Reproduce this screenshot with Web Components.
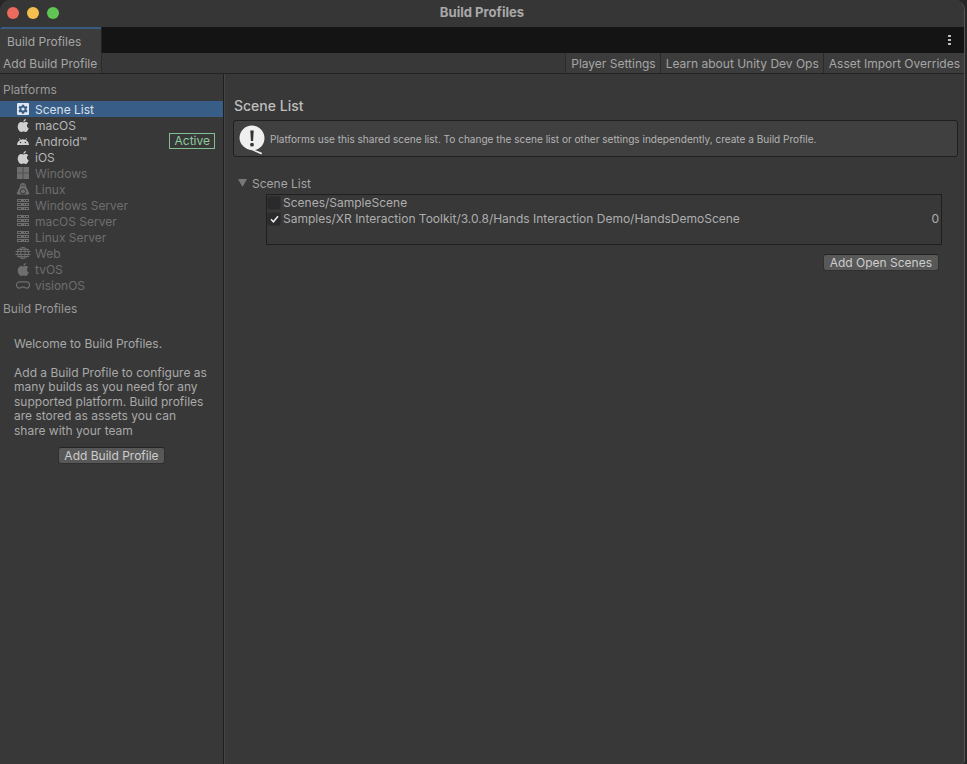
<!DOCTYPE html>
<html>
<head>
<meta charset="utf-8">
<title>Build Profiles</title>
<style>
  html, body { margin: 0; height: 100%; background: #262626; overflow: hidden; }
  body { font: 12px Inter, "Liberation Sans", sans-serif; color: #bdbdbd; }
</style>
</head>
<body>

<build-window>
  <title-bar slot="title">Build Profiles</title-bar>
  <tab-strip slot="tabs">Build Profiles</tab-strip>
  <tool-bar slot="toolbar">
    <tool-button>Add Build Profile</tool-button>
    <span style="flex:1"></span>
    <tool-button left>Player Settings</tool-button>
    <tool-button left>Learn about Unity Dev Ops</tool-button>
    <tool-button left>Asset Import Overrides</tool-button>
  </tool-bar>

  <side-panel slot="side">
    <section-label>Platforms</section-label>
    <platform-item icon="scene" selected>Scene List</platform-item>
    <platform-item icon="apple">macOS</platform-item>
    <platform-item icon="android" active>Android™</platform-item>
    <platform-item icon="apple">iOS</platform-item>
    <platform-item icon="windows" disabled>Windows</platform-item>
    <platform-item icon="linux" disabled>Linux</platform-item>
    <platform-item icon="server" disabled>Windows Server</platform-item>
    <platform-item icon="server" disabled>macOS Server</platform-item>
    <platform-item icon="server" disabled>Linux Server</platform-item>
    <platform-item icon="web" disabled>Web</platform-item>
    <platform-item icon="apple" disabled>tvOS</platform-item>
    <platform-item icon="vision" disabled>visionOS</platform-item>
    <section-label profiles>Build Profiles</section-label>
    <welcome-note>
      <span slot="head">Welcome to Build Profiles.</span>
      Add a Build Profile to configure as many builds as you need for any supported platform. Build profiles are stored as assets you can share with your team
      <unity-button slot="action" style="padding:0 5px">Add Build Profile</unity-button>
    </welcome-note>
  </side-panel>

  <main-panel slot="main">
    <help-box>Platforms use this shared scene list. To change the scene list or other settings independently, create a Build Profile.</help-box>
    <scene-list>
      <scene-row name="Scenes/SampleScene"></scene-row>
      <scene-row name="Samples/XR Interaction Toolkit/3.0.8/Hands Interaction Demo/HandsDemoScene" checked index="0"></scene-row>
    </scene-list>
  </main-panel>
</build-window>

<script>
// small helper so every element gets the same open shadow setup
function shadow(el, html) {
  const root = el.attachShadow({ mode: 'open' });
  root.innerHTML = html;
  return root;
}

const APPLE = `<path d="M9.900 1c.1 1.100-.9 2.700-2.500 2.700C7.200 2.400 8.500 1.100 9.900 1zM7.300 4.400c.7 0 1.300-.5 2.400-.5 1 0 2 .5 2.600 1.400-2 1.200-1.700 4 .4 4.900-.5 1.400-1.700 3.800-3 3.800-.8 0-1.200-.5-2.200-.5s-1.500.5-2.200.5C3.200 14 1.700 10.800 1.700 8.500c0-2.700 1.700-4.500 3.500-4.500.9 0 1.500.4 2.100.4z"/>`;

// one server rack row: solid bar with a long slot on the left and two dots on the right
const rack = y => `M1 ${y}h12v3H1zM2 ${y + 1}v1h3v-1zM8 ${y + 1}v1h1v-1zM10 ${y + 1}v1h2v-1z`;

const ICONS = {
  scene: `<path fill-rule="evenodd" d="M2 1h10a1 1 0 0 1 1 1v10a1 1 0 0 1-1 1H2a1 1 0 0 1-1-1V2a1 1 0 0 1 1-1zm4 1.700-.3 1.300-1 .5-1.200-.5-1 1.700 1 .9v1.200l-1 .9 1 1.700 1.200-.5 1 .5.300 1.300h2l.3-1.300 1-.5 1.200.5 1-1.700-1-.9V6.600l1-.9-1-1.700-1.200.5-1-.5L8 2.700H6zM7 5.400A1.600 1.600 0 1 1 7 8.600 1.600 1.600 0 0 1 7 5.400z"/>`,
  apple: APPLE,
  android: `<path d="M1 11c.1-2.200 1.200-4 3-5L3 4.300l.5-.3 1.100 1.700A6.300 6.300 0 0 1 7 5.200c.9 0 1.700.2 2.400.5L10.500 4l.5.3-1 1.700c1.800 1 2.900 2.800 3 5H1z"/><circle cx="4.600" cy="8.500" r=".7" fill="#383838"/><circle cx="9.400" cy="8.500" r=".7" fill="#383838"/>`,
  windows: `<path d="M1 1h5.700v5.700H1zM7.300 1H13v5.700H7.300zM1 7.300h5.700V13H1zM7.300 7.300H13V13H7.300z"/>`,
  linux: `<path d="M7 1a3 3 0 0 1 3 3c0 1 .4 1.600 1 2.400.8 1 1.300 2.200 1.300 3.300l1.200 1.300-1 1.500H1.500L.5 11l1.200-1.300c0-1.100.5-2.300 1.300-3.300.6-.8 1-1.400 1-2.400a3 3 0 0 1 3-3z"/><ellipse cx="7" cy="9.300" rx="2.700" ry="2.500" fill="none" stroke="#383838"/><circle cx="5.900" cy="3.500" r=".7" fill="#383838"/><circle cx="8.100" cy="3.500" r=".7" fill="#383838"/>`,
  server: `<path fill-rule="evenodd" d="${rack(1)}${rack(5)}${rack(9)}"/>`,
  web: `<g fill="none" stroke="currentColor" stroke-width="1"><ellipse cx="7" cy="7" rx="5.500" ry="5.500"/><ellipse cx="7" cy="7" rx="2.200" ry="5.500"/></g><path d="M-.5 5h15v1h-15zM-.5 8h15v1h-15zM1 3h12v1H1zM1 10h12v1H1z"/>`,
  vision: `<path fill="none" stroke="currentColor" stroke-width="1.200" d="M4 3.800h6c2 0 3.500 1.200 3.500 3 0 1.800-1.200 3.300-2.800 3.300-1.500 0-2.200-1.300-3.700-1.300s-2.200 1.300-3.700 1.300C1.700 10.100.5 8.600.5 6.800c0-1.800 1.500-3 3.500-3z"/>`
};

class BuildWindow extends HTMLElement {
  constructor() {
    super();
    shadow(this, `
      <style>
        :host { display: flex; flex-direction: column; width: 965px; height: 764px; box-sizing: border-box; background: #383838; border-right: 1px solid #565656; border-radius: 10px 10px 4px 0; overflow: hidden; }
        .body { flex: 1; display: flex; min-height: 0; }
      </style>
      <slot name="title"></slot>
      <slot name="tabs"></slot>
      <slot name="toolbar"></slot>
      <div class="body"><slot name="side"></slot><slot name="main"></slot></div>`);
  }
}

class TitleBar extends HTMLElement {
  constructor() {
    super();
    shadow(this, `
      <style>
        :host { display: flex; align-items: center; justify-content: center; position: relative; height: 23px; padding-bottom: 4px; background: #363636; color: #a8a8a8; font-weight: 700; font-size: 13.100px; }
        .lights { position: absolute; left: 7px; top: 7px; display: flex; gap: 8px; }
        i { display: block; width: 12px; height: 12px; border-radius: 50%; }
      </style>
      <div class="lights">
        <i style="background:#ec6a5e"></i><i style="background:#f4bf4f"></i><i style="background:#61c554"></i>
      </div>
      <slot></slot>`);
  }
}

class TabStrip extends HTMLElement {
  constructor() {
    super();
    shadow(this, `
      <style>
        :host { display: flex; height: 26px; background: #141414; justify-content: space-between; }
        .tab { width: 102px; box-sizing: border-box; padding: 3px 0 0 7px; background: #3c3c3c; border-top: 2px solid #3a5b7f; border-right: 1px solid #232323; border-radius: 2px 2px 0 0; line-height: 20px; color: #a6a6a6; }
        svg { width: 3px; height: 10px; margin: 8px 13px 0 0; fill: #bdbdbd; }
      </style>
      <div class="tab"><slot></slot></div>
      <svg viewBox="0 0 3 10"><rect y="0" width="3" height="2"/><rect y="4" width="3" height="2"/><rect y="8" width="3" height="2"/></svg>`);
  }
}

class ToolBar extends HTMLElement {
  constructor() {
    super();
    shadow(this, `
      <style>
        :host { display: flex; height: 21px; box-sizing: border-box; background: #383838; border-bottom: 1px solid #232323; }
      </style>
      <slot></slot>`);
  }
}

class ToolButton extends HTMLElement {
  constructor() {
    super();
    shadow(this, `
      <style>
        :host { display: block; padding: 2px 4px 0 3px; line-height: 18px; color: #a6a6a6; background: #3c3c3c; border-right: 1px solid #2b2b2b; white-space: nowrap; }
        :host([left]) { border-right: none; border-left: 1px solid #2b2b2b; padding: 2px 4px 0 5px; }
      </style>
      <slot></slot>`);
  }
}

class SidePanel extends HTMLElement {
  constructor() {
    super();
    shadow(this, `
      <style>
        :host { display: block; width: 223px; height: 100%; border-right: 1px solid #1f1f1f; box-shadow: 1px 0 0 #454545; }
      </style>
      <slot></slot>`);
  }
}

class SectionLabel extends HTMLElement {
  constructor() {
    super();
    shadow(this, `
      <style>
        :host { display: block; height: 27px; box-sizing: border-box; padding: 8px 0 0 3px; line-height: 16px; color: #9a9a9a; }
        :host([profiles]) { height: 25px; padding-top: 8px; }
      </style>
      <slot></slot>`);
  }
}

class PlatformItem extends HTMLElement {
  constructor() {
    super();
    const kind = this.getAttribute('icon');
    shadow(this, `
      <style>
        :host { display: flex; align-items: center; height: 16px; padding-left: 16px; color: #b6b6b6; }
        :host([selected]) { background: #385d87; color: #d8e0ea; }
        :host([disabled]) { color: #6e6e6e; }
        svg { width: 14px; height: 14px; margin-right: 5px; fill: currentColor; flex: none; color: #cfcfcf; overflow: visible; }
        :host([selected]) svg { color: #dfe6ee; }
        :host([disabled]) svg { color: #6e6e6e; }
        .badge { margin-left: auto; margin-right: 8px; height: 14px; border: 1px solid #82bd93; color: #8dcb9d; line-height: 14px; padding: 0 4px 0 5px; }
      </style>
      <svg viewBox="0 0 14 14">${ICONS[kind]}</svg>
      <slot></slot>
      ${this.hasAttribute('active') ? '<span class="badge">Active</span>' : ''}`);
  }
}

class WelcomeNote extends HTMLElement {
  constructor() {
    super();
    shadow(this, `
      <style>
        :host { display: block; padding: 19px 16px 0 14px; line-height: 14.500px; color: #a8a8a8; }
        .head { margin-bottom: 14px; }
        .act { display: flex; justify-content: center; margin: 9px -13px 0 -11px; }
      </style>
      <div class="head"><slot name="head"></slot></div>
      <slot></slot>
      <div class="act"><slot name="action"></slot></div>`);
  }
}

class UnityButton extends HTMLElement {
  constructor() {
    super();
    shadow(this, `
      <style>
        :host { display: inline-block; height: 15px; line-height: 15px; padding: 0 6px; border-radius: 3px; background: #585858; color: #cdcdcd; border: 1px solid #303030; border-top-color: #242424; white-space: nowrap; }
      </style>
      <slot></slot>`);
  }
}

class MainPanel extends HTMLElement {
  constructor() {
    super();
    shadow(this, `
      <style>
        :host { display: block; flex: 1; min-width: 0; padding: 23px 6px 0 9px; }
        h2 { margin: 0 0 6px 1px; font-size: 14px; font-weight: 500; line-height: 17px; color: #bebebe; }
      </style>
      <h2>Scene List</h2>
      <slot></slot>`);
  }
}

class HelpBox extends HTMLElement {
  constructor() {
    super();
    shadow(this, `
      <style>
        :host { display: flex; align-items: center; height: 35px; border: 1px solid #1f1f1f; border-radius: 3px; background: #404040; font-size: 10.050px; color: #b4b4b4; white-space: nowrap; }
        svg { width: 28px; height: 32px; margin: 0 4px 0 4px; flex: none; }
      </style>
      <svg viewBox="0 0 28 32">
        <path fill="#efefef" d="M14 2.500c7 0 12.500 5.500 12.500 12.500 0 6-4 11-9.500 12l7 2.800-.5 1.700-9.500-4.200C7.500 26.500 1.500 21.500 1.500 15 1.500 8 7 2.500 14 2.500z"/>
        <path fill="#333" d="M12.300 7.500h3.400l-.6 10.500h-2.200zM14 19.800a1.900 1.900 0 1 1 0 3.800 1.900 1.900 0 0 1 0-3.800z"/>
      </svg>
      <slot></slot>`);
  }
}

class SceneList extends HTMLElement {
  constructor() {
    super();
    shadow(this, `
      <style>
        :host { display: block; }
        .head { display: flex; align-items: center; margin-top: 18px; height: 16px; color: #a4a4a4; }
        .head svg { width: 9px; height: 8px; margin: 0 5px 0 5px; fill: #787878; }
        .list { margin: 3px 16px 0 33px; height: 49px; border: 1px solid #1f1f1f; }
        .foot { display: flex; justify-content: flex-end; margin: 9px 19px 0 0; }
      </style>
      <div class="head"><svg viewBox="0 0 9 8"><path d="M0 0h9L4.500 8z"/></svg>Scene List</div>
      <div class="list"><slot></slot></div>
      <div class="foot"><unity-button>Add Open Scenes</unity-button></div>`);
  }
}

class SceneRow extends HTMLElement {
  constructor() {
    super();
    const checked = this.hasAttribute('checked');
    shadow(this, `
      <style>
        :host { display: flex; align-items: center; height: 16px; padding: 0 2px 0 0; color: #aeaeae; white-space: nowrap; }
        .box { width: 12px; height: 12px; margin-right: 2px; flex: none; background: #2a2a2a; border: 1px solid #303030; border-radius: 3px; display: flex; align-items: center; justify-content: center; }
        .box svg { width: 9px; height: 8px; }
        .txt { padding-bottom: 2px; }
        .idx { margin-left: auto; }
      </style>
      <span class="box">${checked ? '<svg viewBox="0 0 9 8"><path d="M1 4.300 3.400 6.800 8 1.200" fill="none" stroke="#eee" stroke-width="1.500"/></svg>' : ''}</span>
      <span class="txt">${this.getAttribute('name')}</span>
      <span class="txt idx">${this.getAttribute('index') || ''}</span>`);
  }
}

customElements.define('build-window', BuildWindow);
customElements.define('title-bar', TitleBar);
customElements.define('tab-strip', TabStrip);
customElements.define('tool-bar', ToolBar);
customElements.define('tool-button', ToolButton);
customElements.define('side-panel', SidePanel);
customElements.define('section-label', SectionLabel);
customElements.define('platform-item', PlatformItem);
customElements.define('welcome-note', WelcomeNote);
customElements.define('unity-button', UnityButton);
customElements.define('main-panel', MainPanel);
customElements.define('help-box', HelpBox);
customElements.define('scene-list', SceneList);
customElements.define('scene-row', SceneRow);
</script>
</body>
</html>
